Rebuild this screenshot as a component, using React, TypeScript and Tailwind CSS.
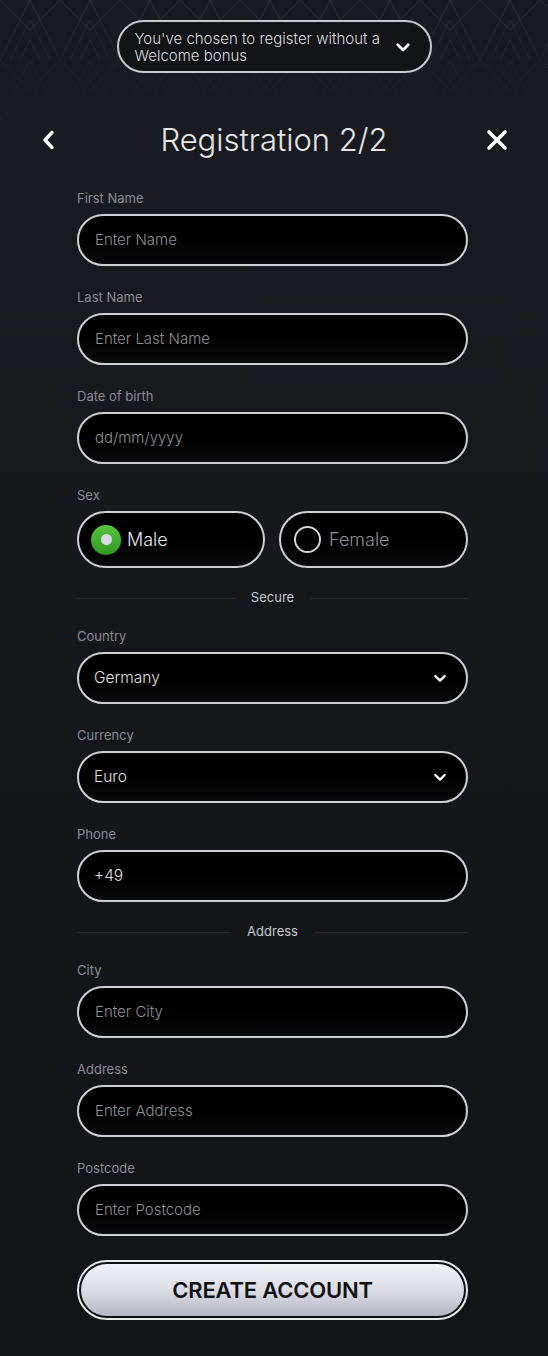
import React from "react";

const font = { fontFamily: "Inter, 'Noto Sans', 'Liberation Sans', sans-serif" };

function Chevron({ className }: { className?: string }) {
  return (
    <svg viewBox="0 0 24 24" className={className} fill="none" stroke="currentColor" strokeWidth={3.6} strokeLinecap="round" strokeLinejoin="round">
      <path d="M5 9l7 7 7-7" />
    </svg>
  );
}

function Field({ label, placeholder, value, select }: { label: string; placeholder?: string; value?: string; select?: boolean }) {
  return (
    <div className="flex flex-col">
      <span className="text-[13px] leading-4 h-4 mb-2 text-[#8b8d93]">{label}</span>
      <div className="h-[52px] rounded-full border-2 border-[#cfd0d3] bg-gradient-to-b from-[#000000] to-[#0b0b0d] flex items-center pl-[15px] pr-[18px]">
        {value ? (
          <span className="text-[15.5px] font-light text-[#e0e0e2]">{value}</span>
        ) : (
          <span className="pl-[1px] text-[15px] font-light text-[#8e8f94]">{placeholder}</span>
        )}
        {select && <Chevron className="ml-auto w-[16px] h-[16px] text-white" />}
      </div>
    </div>
  );
}

function Divider({ text }: { text: string }) {
  return (
    <div className="flex items-center gap-4 h-4 my-[22px]">
      <div className="flex-1 h-px bg-[#24262b]" />
      <span className="text-[13px] text-[#c8c9cd]">{text}</span>
      <div className="flex-1 h-px bg-[#24262b]" />
    </div>
  );
}

export default function App() {
  return (
    <div style={font} className="relative w-[548px] h-[1356px] bg-gradient-to-b from-[#1b1c21] via-[#15171b] to-[#121418] overflow-hidden">
      <svg className="absolute left-0 top-0 w-[548px] h-[120px] opacity-[0.07]" viewBox="0 0 548 120" fill="none" stroke="#ffffff" strokeWidth={1}>
        <defs>
          <pattern id="deco" width="60" height="60" patternUnits="userSpaceOnUse">
            <path d="M0 60L30 0L60 60M10 60L30 20L50 60M20 60L30 40L40 60M0 0L30 30L60 0" />
          </pattern>
          <linearGradient id="fade" x1="0" y1="0" x2="0" y2="1">
            <stop offset="0" stopColor="#fff" />
            <stop offset="1" stopColor="#000" />
          </linearGradient>
          <mask id="m">
            <rect width="548" height="120" fill="url(#fade)" />
          </mask>
        </defs>
        <rect width="548" height="120" fill="url(#deco)" stroke="none" mask="url(#m)" />
      </svg>

      <div className="relative pt-5 flex justify-center">
        <div className="w-[315px] h-[53px] rounded-full border-2 border-[#c9cacd] bg-[#131418] flex items-center pl-[16px] pr-[18px]">
          <span className="text-[15px] leading-[17px] font-light text-[#dcdcdf]">
            You've chosen to register without a<br />Welcome bonus
          </span>
          <Chevron className="ml-auto w-[18px] h-[18px] text-white" />
        </div>
      </div>

      <div className="relative h-[48px] mt-[43px] flex items-center justify-center">
        <svg viewBox="0 0 24 24" className="absolute left-[37px] w-[24px] h-[26px] text-white" fill="none" stroke="currentColor" strokeWidth={3.4} strokeLinecap="round" strokeLinejoin="round">
          <path d="M15 4.5l-7 7.5 7 7.5" />
        </svg>
        <span className="text-[31px] font-light text-[#e6e6e8]">Registration 2/2</span>
        <svg viewBox="0 0 24 24" className="absolute left-[485px] w-[24px] h-[24px] text-white" fill="none" stroke="currentColor" strokeWidth={3.6} strokeLinecap="round">
          <path d="M4 4l16 16M20 4L4 20" />
        </svg>
      </div>

      <div className="relative ml-[77px] w-[391px] mt-[26px] flex flex-col">
        <div className="flex flex-col gap-[23px]">
          <Field label="First Name" placeholder="Enter Name" />
          <Field label="Last Name" placeholder="Enter Last Name" />
          <Field label="Date of birth" placeholder="dd/mm/yyyy" />
          <div className="flex flex-col">
            <span className="text-[13px] leading-4 h-4 mb-2 text-[#8b8d93]">Sex</span>
            <div className="flex gap-[14px]">
              <div className="flex-1 h-[57px] rounded-full border-2 border-[#cfd0d3] bg-gradient-to-b from-[#000000] to-[#0b0b0d] flex items-center pl-[12px] gap-[6px]">
                <div className="w-[30px] h-[30px] rounded-full bg-gradient-to-b from-[#56c43c] to-[#2f9a22] flex items-center justify-center">
                  <div className="w-[11px] h-[11px] rounded-full bg-[#d9dbe4]" />
                </div>
                <span className="text-[18px] font-light text-[#e4e4e6]">Male</span>
              </div>
              <div className="flex-1 h-[57px] rounded-full border-2 border-[#cfd0d3] bg-gradient-to-b from-[#000000] to-[#0b0b0d] flex items-center pl-[13px] gap-[8px]">
                <div className="w-[27px] h-[27px] rounded-full border-2 border-[#d4d4d7]" />
                <span className="text-[18px] font-light text-[#8e8f94]">Female</span>
              </div>
            </div>
          </div>
        </div>

        <Divider text="Secure" />

        <div className="flex flex-col gap-[23px]">
          <Field label="Country" value="Germany" select />
          <Field label="Currency" value="Euro" select />
          <Field label="Phone" value="+49" />
        </div>

        <Divider text="Address" />

        <div className="flex flex-col gap-[23px]">
          <Field label="City" placeholder="Enter City" />
          <Field label="Address" placeholder="Enter Address" />
          <Field label="Postcode" placeholder="Enter Postcode" />
        </div>

        <div className="mt-[24px] h-[60px] rounded-full border-2 border-[#e8e8ec] p-[2px] bg-[#111216]">
          <div className="h-full rounded-full bg-gradient-to-b from-[#f1f2f6] via-[#dcdde4] to-[#b5b6c3] flex items-center justify-center">
            <span className="text-[22px] font-semibold text-[#121318] tracking-[-0.2px]">CREATE ACCOUNT</span>
          </div>
        </div>
      </div>
    </div>
  );
}
